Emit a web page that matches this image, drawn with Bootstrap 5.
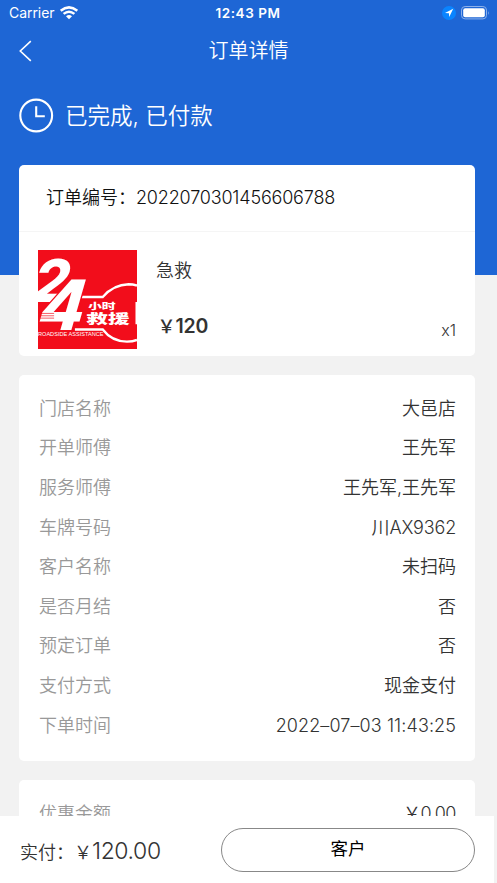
<!DOCTYPE html>
<html lang="zh-CN">
<head>
<meta charset="utf-8">
<meta name="viewport" content="width=device-width, initial-scale=1">
<title>订单详情</title>
<link href="https://cdn.jsdelivr.net/npm/bootstrap@5.3.0/dist/css/bootstrap.min.css" rel="stylesheet">
<style>
body{font-family:Inter,"Noto Sans CJK SC",sans-serif;font-weight:350;font-size:18px;line-height:26px;color:#333;background:#f2f2f2}
.screen{height:883px}
.hero{height:275px;background:#1e66d5}
.statusbar{height:26px;padding:0 7px 0 9px;font-size:14px;line-height:26px}
.statusbar>div{flex:1 1 0}
.carrier{letter-spacing:-.05px;font-weight:400}
.clock{font-size:13.5px;letter-spacing:.55px;font-weight:600;margin-left:-3px}
.titlebar{height:50px;padding:0 19px;font-size:20px}
.titlebar>div{flex:1 1 0}
.state{height:79px;padding-left:19px;gap:11px;font-size:22.5px}
.panels{margin-top:-110px;padding:0 22px 0 19px;gap:19px}
.panel{background:#fff;border-radius:5px}
.order-head{height:67px;padding-left:27px;border-bottom:1px solid #f5f5f5;color:#111}
.order-body{padding:18px 19px 7px;height:124px}
.thumb{width:99px;height:99px}
.item-info{padding:8px 0 9px 19px}
.price{font-size:19.5px;font-weight:600;letter-spacing:-.1px}
.price .yen{font-size:18px;font-weight:500;margin-left:1.5px}
.qty{font-size:16px;margin-bottom:6px}
.detail{padding:14px 19px 15px 20px;height:386px}
.line{height:39.6px}
.label{color:#999}
.num{letter-spacing:-.18px}
.date{letter-spacing:.1px}
.amount{letter-spacing:-.5px}
.paybar{height:67px;width:494px;background:#fff;padding:0 19px 0 20px}
.total{font-size:23px;letter-spacing:-.4px}
.pay{margin-top:4px}
.cust{width:254px;height:44px;border:1px solid #888;color:#000;font-size:17.5px;font-weight:400}
</style>
<script src="https://cdn.jsdelivr.net/npm/bootstrap@5.3.0/dist/js/bootstrap.bundle.min.js"></script>
</head>
<body>
<div class="screen d-flex flex-column overflow-hidden">
  <main class="flex-grow-1 overflow-hidden">
    <header class="hero text-white">
      <div class="statusbar d-flex align-items-center">
        <div class="d-flex align-items-center gap-1"><span class="carrier">Carrier</span>
          <svg width="20" height="14" viewBox="0 0 20 14" fill="none" stroke="#fff" stroke-width="2.5"><path d="M1.7 4.7Q10-2 18.3 4.7M4.6 7.9Q10 3.5 15.4 7.9"/><path d="M7 10.2Q10 7.8 13 10.2L10 13.2Z" fill="#fff" stroke="none"/></svg>
        </div>
        <span class="clock">12:43 PM</span>
        <div class="d-flex align-items-center justify-content-end">
          <svg width="48" height="16" viewBox="0 0 48 16"><circle cx="7" cy="8" r="7" fill="#0a84ff"/><path d="M11.2 3.8 3 7.9l3.9.3.3 3.9Z" fill="#fff"/><rect x="19.5" y="1.5" width="25" height="12.4" rx="3.6" fill="none" stroke="#8db1ea"/><rect x="21.2" y="3.2" width="21.6" height="9" rx="2" fill="#fff"/><path d="M46 6v4Q47.6 8 46 6" fill="#8db1ea"/></svg>
        </div>
      </div>
      <div class="titlebar d-flex align-items-center">
        <div><svg class="d-block" width="14" height="22" viewBox="0 0 14 22" fill="none" stroke="#fff" stroke-width="1.6"><path d="M11.8 1.2 1.3 11l10.5 9.8"/></svg></div>
        <span>订单详情</span>
        <div></div>
      </div>
      <div class="state d-flex align-items-center">
        <svg width="35" height="35" viewBox="0 0 35 35" fill="none" stroke="#fff" stroke-width="2.1"><circle cx="17.2" cy="17.5" r="15.9"/><path d="M17.2 8.2v10.1h8.6"/></svg>
        <span>已完成, 已付款</span>
      </div>
    </header>
    <div class="panels d-flex flex-column position-relative">
      <section class="panel">
        <div class="order-head d-flex align-items-center"><span>订单编号：</span><span class="num">2022070301456606788</span></div>
        <div class="order-body d-flex">
          <svg class="thumb flex-shrink-0" viewBox="0 0 295 295">
            <rect width="295" height="295" fill="#f20d1b"/>
            <g fill="none" stroke="#fff" stroke-width="7"><path d="M130 140H193Q225 103 270 102Q283 102 295 106M110 237H193Q220 273 265 273Q283 273 295 268M294 155v66"/></g>
            <g font-family="Inter" font-weight="800" fill="#fff">
              <text transform="translate(-29 154) skewX(-16) scale(.95 1)" font-size="176">2</text>
              <text transform="translate(-11 238) skewX(-16) scale(.95 1)" font-size="207" stroke="#f20d1b" stroke-width="9" paint-order="stroke">4</text>
            </g>
            <path d="M0 189h48M0 196h48M0 203h48" stroke="#f20d1b" stroke-width="2"/>
            <g font-family="Noto Sans CJK SC" font-weight="800" fill="#fff">
              <text transform="translate(149 177) scale(1.8 1)" font-size="23">小时</text>
              <text transform="translate(144 219) scale(1.7 1)" font-size="38">救援</text>
            </g>
            <text x="0" y="257" font-family="Liberation Sans" font-size="14" fill="#fff" textLength="195" lengthAdjust="spacingAndGlyphs">ROADSIDE ASSISTANCE</text>
          </svg>
          <div class="item-info flex-grow-1 d-flex flex-column justify-content-between">
            <span>急救</span>
            <span class="price"><span class="yen">￥</span>120</span>
          </div>
          <span class="qty align-self-end">x1</span>
        </div>
      </section>
      <section class="panel detail">
        <div class="line d-flex align-items-center justify-content-between"><span class="label">门店名称</span><span>大邑店</span></div>
        <div class="line d-flex align-items-center justify-content-between"><span class="label">开单师傅</span><span>王先军</span></div>
        <div class="line d-flex align-items-center justify-content-between"><span class="label">服务师傅</span><span>王先军,王先军</span></div>
        <div class="line d-flex align-items-center justify-content-between"><span class="label">车牌号码</span><span>川<span class="num">AX9362</span></span></div>
        <div class="line d-flex align-items-center justify-content-between"><span class="label">客户名称</span><span>未扫码</span></div>
        <div class="line d-flex align-items-center justify-content-between"><span class="label">是否月结</span><span>否</span></div>
        <div class="line d-flex align-items-center justify-content-between"><span class="label">预定订单</span><span>否</span></div>
        <div class="line d-flex align-items-center justify-content-between"><span class="label">支付方式</span><span>现金支付</span></div>
        <div class="line d-flex align-items-center justify-content-between"><span class="label">下单时间</span><span class="date">2022–07–03 11:43:25</span></div>
      </section>
      <section class="panel detail">
        <div class="line d-flex align-items-center justify-content-between"><span class="label">优惠金额</span><span class="amount">￥0.00</span></div>
      </section>
    </div>
  </main>
  <footer class="paybar d-flex align-items-center justify-content-between flex-shrink-0">
    <div class="pay d-flex align-items-baseline"><span>实付：</span><span>￥</span><span class="total">120.00</span></div>
    <button type="button" class="btn cust rounded-pill p-0">客户</button>
  </footer>
</div>
</body>
</html>
